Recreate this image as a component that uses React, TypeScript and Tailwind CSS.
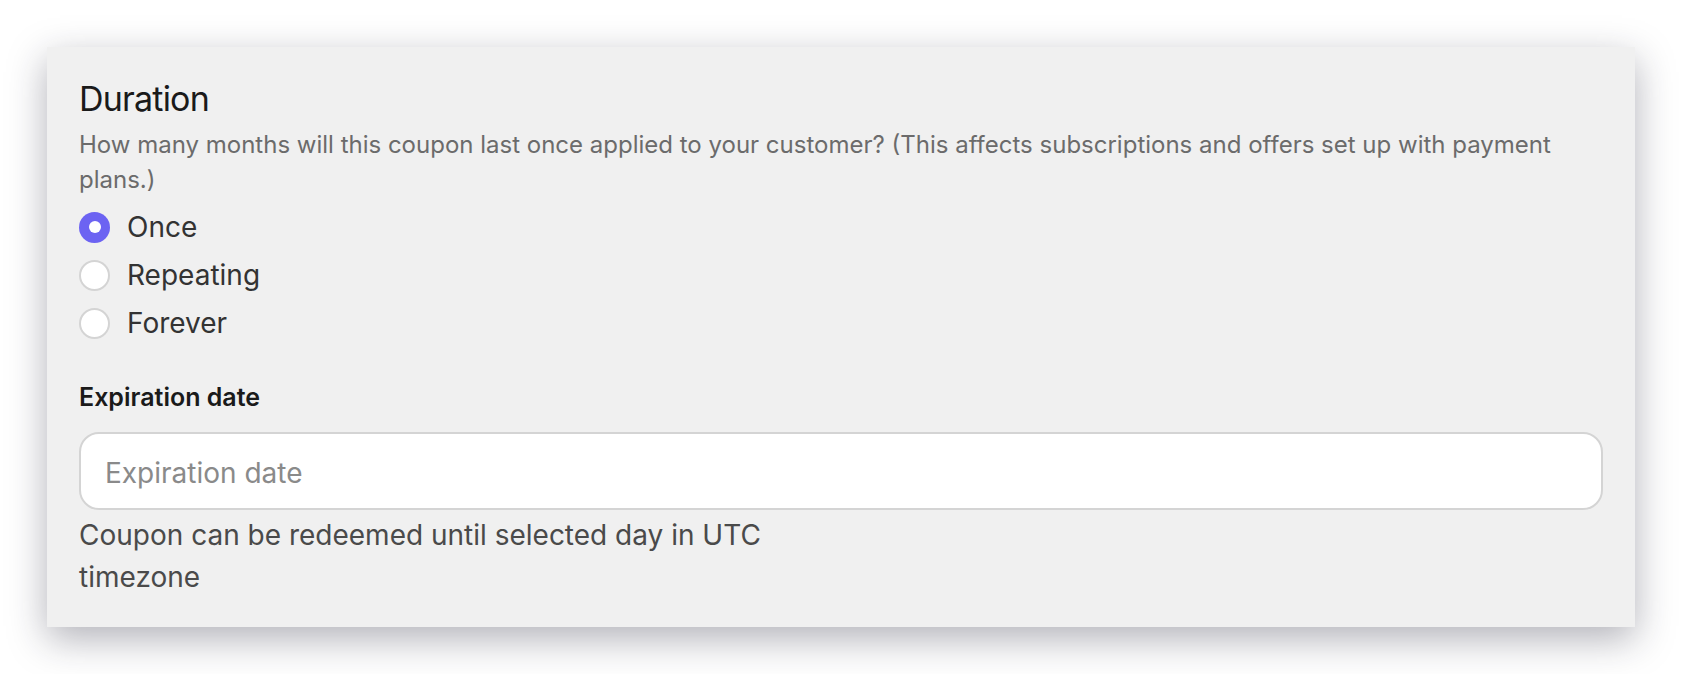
import { useState } from "react";

const DURATION_OPTIONS = ["Once", "Repeating", "Forever"] as const;

type Duration = (typeof DURATION_OPTIONS)[number];

function RadioRow({
  label,
  checked,
  onSelect,
}: {
  label: string;
  checked: boolean;
  onSelect: () => void;
}) {
  return (
    <label className="flex h-12 cursor-pointer items-center gap-[17px]">
      <input type="radio" name="duration" className="sr-only" checked={checked} onChange={onSelect} />
      {checked ? (
        <span className="flex h-[31px] w-[31px] shrink-0 items-center justify-center rounded-full bg-[#6c63f2]">
          <span className="h-3 w-3 rounded-full bg-white" />
        </span>
      ) : (
        <span className="h-[31px] w-[31px] shrink-0 rounded-full border-2 border-[#d4d4d4] bg-white" />
      )}
      <span className="text-[28px] leading-[36px] text-[#333333]">{label}</span>
    </label>
  );
}

export default function App() {
  const [duration, setDuration] = useState<Duration>("Once");
  const [expiration, setExpiration] = useState("");

  return (
    <div className="min-h-screen bg-white p-[47px] font-['Inter','Noto_Sans',sans-serif]">
      <div className="bg-[#f0f0f0] px-8 pb-[29px] pt-8 shadow-[0_12px_36px_rgba(30,30,50,0.34)]">
        <h2 className="text-[34px] leading-[40px] tracking-[-0.8px] text-[#1a1a1a]">Duration</h2>
        <p className="mt-2 text-[24px] leading-[35px] text-[#6b6b6b]">
          How many months will this coupon last once applied to your customer? (This affects subscriptions and
          offers set up with payment plans.)
        </p>

        <div className="mt-[6px] flex flex-col">
          {DURATION_OPTIONS.map((option) => (
            <RadioRow
              key={option}
              label={option}
              checked={duration === option}
              onSelect={() => setDuration(option)}
            />
          ))}
        </div>

        <label htmlFor="expiration" className="mt-8 block text-[25px] font-semibold leading-[36px] text-[#1a1a1a]">
          Expiration date
        </label>
        <input
          id="expiration"
          value={expiration}
          onChange={(e) => setExpiration(e.target.value)}
          placeholder="Expiration date"
          className="mt-[17px] block h-[78px] w-full rounded-[20px] border-2 border-[#d4d4d4] bg-white px-6 pt-[3px] text-[28px] text-[#333333] outline-none placeholder:text-[#8a8a8a]"
        />
        <p className="mt-[4px] max-w-[800px] text-[28px] leading-[42px] text-[#4a4a4a]">
          Coupon can be redeemed until selected day in UTC timezone
        </p>
      </div>
    </div>
  );
}
